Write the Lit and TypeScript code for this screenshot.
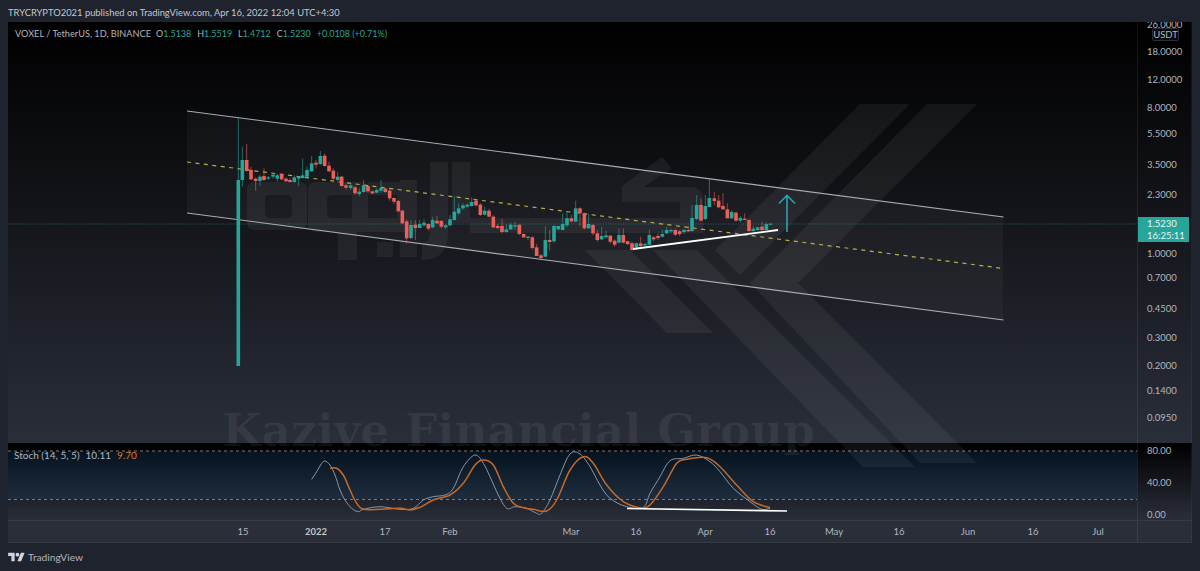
import { LitElement, html, css, svg } from "lit";
import { customElement } from "lit/decorators.js";

type C = [number, number, number, number, number, string];
const A: C[] = [
[187,140,260,180,240,"t"],[200,132,215,180,213,"r"],[213,200,240,210,238,"r"],[227,232,272,236,243,"r"],[240,225,258,230,243,"t"],[252,205,243,228,240,"r"],[265,228,240,232,236,"t"],[279,222,236,224,230,"t"],[292,222,245,226,236,"t"],[305,220,242,222,238,"r"],[318,232,246,236,244,"r"],[330,234,248,240,246,"r"],[343,226,248,232,246,"t"],[356,228,258,230,236,"t"],[368,176,236,226,234,"t"],[381,200,236,210,230,"t"],[395,168,215,190,214,"t"],[408,180,205,188,194,"r"],[421,153,195,168,192,"t"],[434,160,200,167,198,"r"],[447,185,215,197,214,"r"],[460,205,240,212,236,"r"],[473,215,245,230,240,"t"],[485,228,260,230,258,"r"],[498,250,268,256,263,"r"],[512,250,270,256,264,"t"],[525,258,285,262,280,"r"],[538,265,288,275,282,"t"],[551,240,278,256,276,"t"],[564,256,278,258,274,"r"],[577,272,282,274,280,"r"],[590,265,280,270,278,"t"],[603,240,278,264,272,"t"],[616,264,278,266,276,"r"],[629,265,302,272,295,"r"],[642,292,312,294,305,"r"],[655,300,335,303,334,"r"],[667,330,372,332,370,"r"],[680,358,430,364,415,"r"],[693,360,418,375,414,"t"],[706,360,420,374,384,"r"],[719,360,385,372,384,"t"],[732,358,380,368,376,"t"],[745,370,392,372,386,"r"],[758,350,385,360,382,"t"],[771,348,372,362,370,"r"]];
const B: C[] = [
[4,210,235,213,230,"r"],[17,222,238,226,232,"t"],[30,195,228,208,226,"t"],[43,138,212,185,210,"t"],[56,160,196,175,190,"t"],[69,160,180,166,175,"t"],[82,160,172,164,170,"t"],[95,142,170,156,168,"t"],[108,148,170,152,166,"r"],[121,160,198,164,195,"r"],[134,170,196,182,194,"t"],[147,176,202,182,200,"r"],[160,196,235,200,232,"r"],[173,222,238,228,234,"r"],[186,208,250,228,246,"r"],[199,222,248,238,246,"t"],[212,218,240,224,238,"t"],[225,215,240,226,230,"t"],[238,224,255,224,252,"r"],[251,250,264,252,262,"r"],[264,258,270,260,264,"t"],[277,258,298,262,294,"r"],[290,282,318,292,318,"r"],[303,312,332,316,324,"r"],[316,228,322,270,320,"t"],[329,240,302,270,276,"r"],[342,225,278,228,274,"t"],[355,228,240,228,238,"t"],[368,190,240,222,240,"t"],[381,185,232,205,226,"t"],[394,195,218,205,214,"r"],[407,152,216,175,215,"t"],[420,172,228,175,190,"r"],[433,188,238,190,235,"r"],[446,190,235,222,235,"t"],[459,222,255,225,250,"r"],[472,240,275,250,270,"r"],[485,230,270,258,268,"t"],[498,242,266,256,262,"t"],[511,255,280,257,275,"r"],[524,268,290,272,284,"r"],[537,235,280,255,278,"t"],[550,235,280,255,278,"r"],[563,272,285,274,282,"r"],[576,275,302,280,300,"r"],[589,278,298,280,292,"t"],[602,260,290,280,288,"r"],[615,278,290,282,286,"t"],[628,238,286,255,284,"t"],[641,258,274,262,268,"r"],[654,250,270,258,264,"r"],[667,240,262,252,260,"t"],[680,230,252,240,250,"t"],[693,235,250,240,244,"t"],[706,236,258,240,254,"r"],[719,240,258,244,252,"r"],[732,236,252,240,246,"t"],[745,228,245,240,244,"r"],[756,165,245,204,243,"t"],[770,135,210,165,207,"t"],[783,145,212,165,212,"r"],[796,135,210,168,207,"t"],[808,87,172,144,171,"t"],[823,125,165,145,153,"r"],[836,135,175,152,172,"r"],[849,130,178,168,178,"r"],[862,160,205,178,205,"r"],[875,180,207,186,205,"t"],[888,185,215,188,212,"r"],[901,198,218,204,212,"t"],[914,190,210,206,210,"r"],[927,208,245,210,243,"r"],[940,228,245,236,243,"t"],[953,232,242,232,240,"t"],[966,215,245,230,240,"r"],[979,218,240,222,240,"t"],[992,218,226,221,224,"t"]];

const candles: { x: number; wt: number; wb: number; bt: number; bb: number; c: string }[] = [
  { x: 238.3, wt: 118, wb: 366, bt: 180, bb: 366, c: "t" },
  ...A.map(([x, a, b, p, q, c]) => ({ x: x / 3 + 180, wt: a / 3 + 100, wb: b / 3 + 100, bt: p / 3 + 100, bb: q / 3 + 100, c })),
  ...B.map(([x, a, b, p, q, c]) => ({ x: x / 3 + 440, wt: a / 3 + 150, wb: b / 3 + 150, bt: p / 3 + 150, bb: q / 3 + 150, c })),
];

const curve = (pts: number[][]) => {
  let d = `M${pts[0][0]} ${pts[0][1]}`;
  for (let i = 0; i < pts.length - 1; i++) {
    const p0 = pts[Math.max(0, i - 1)], p1 = pts[i], p2 = pts[i + 1], p3 = pts[Math.min(pts.length - 1, i + 2)];
    const c1x = p1[0] + (p2[0] - p0[0]) / 6, c1y = p1[1] + (p2[1] - p0[1]) / 6;
    const c2x = p2[0] - (p3[0] - p1[0]) / 6, c2y = p2[1] - (p3[1] - p1[1]) / 6;
    d += `C${c1x.toFixed(1)} ${c1y.toFixed(1)} ${c2x.toFixed(1)} ${c2y.toFixed(1)} ${p2[0].toFixed(1)} ${p2[1].toFixed(1)}`;
  }
  return d;
};
const z5 = (a: number[][]) => a.map(([x, y]) => [x / 3, y / 3 + 400]);
const z6 = (a: number[][]) => a.map(([x, y]) => [x / 3 + 400, y / 3 + 400]);
const fast = [...z5([[935,238],[950,215],[965,190],[975,183],[990,195],[1005,225],[1020,270],[1035,300],[1055,325],[1075,335],[1090,328],[1140,320]]),
  ...z6([[0,328],[40,325],[70,300],[100,290],[135,285],[160,265],[190,200],[225,165],[250,190],[270,230],[295,285],[320,325],[345,320],[380,325],[410,340],[425,340],[450,300],[480,225],[510,162],[540,162],[570,200],[600,255],[630,295],[680,320],[730,322],[750,280],[780,230],[810,182],[850,175],[890,165],[930,185],[960,215],[1000,265],[1050,305],[1085,328],[1110,325]])];
const slow = [...z5([[990,205],[1010,205],[1030,225],[1050,270],[1070,310],[1090,328],[1140,328]]),
  ...z6([[0,325],[30,330],[60,322],[100,300],[150,285],[190,250],[225,195],[250,180],[280,195],[310,260],[340,310],[370,323],[400,328],[440,333],[470,300],[510,210],[550,170],[580,190],[620,255],[670,305],[720,323],[750,315],[790,260],[830,190],[860,178],[920,173],[960,200],[1010,255],[1060,305],[1110,323]])];

const priceLabels: [string, number][] = [["26.0000",25],["18.0000",51.7],["12.0000",79.5],["8.0000",108],["5.5000",134],["3.5000",165],["2.3000",195],["1.0000",253.5],["0.7000",278],["0.4500",309],["0.3000",338],["0.2000",366],["0.1400",391],["0.0950",417.5]];
const stochLabels: [string, number][] = [["80.00",451],["40.00",483],["0.00",515]];
const timeLabels: [string, number, boolean][] = [["15",243,false],["2022",316,true],["17",385,false],["Feb",450,false],["Mar",571,false],["16",636,false],["Apr",705,false],["16",770,false],["May",834,false],["16",899,false],["Jun",968,false],["16",1033,false],["Jul",1098,false]];

const marks = [
  "M860 104H910L740 275L715 250Z",
  "M927 104H977L798 283H750Z",
  "M653 250H697L915 467H863Z",
  "M750 283H798L977 463H920Z",
  "M585 250H630L713 333H667Z",
  "M622 186L662 157L672 168L643 187H690Q703 187 703 200V233H470V218H680V202H622Z",
  "M255 182H299Q307 182 307 190V222Q307 230 299 230H255Q247 230 247 222V190Q247 182 255 182ZM270 195Q265 195 265 200V213Q265 218 270 218H287Q292 218 292 213V200Q292 195 287 195Z",
  "M316 182H360Q368 182 368 190V195H332Q327 195 327 200V213Q327 218 332 218H352V195H368V218H397V195H368V182H400V180H417V232H357V260H338V232H316Q308 232 308 224V190Q308 182 316 182Z",
  "M377 242H393V257H377ZM400 242H417V257H400Z",
  "M430 162H448V233Q448 260 422 260V243Q430 243 430 233Z",
  "M452 162H470V223H452Z",
];

@customElement("app-root")
export class AppRoot extends LitElement {
  static styles = css`
    :host { display: block; width: 1200px; height: 571px; overflow: hidden; background: #1e232e;
      font-family: "Lato", "Open Sans", sans-serif; color: #b2b5be; }
    .page { display: flex; flex-direction: column; height: 571px; padding: 0 8px; box-sizing: border-box; }
    .head { height: 22px; display: flex; align-items: center; font-size: 9.4px; color: #c3c6cd; padding-top: 3px; box-sizing: border-box; white-space: nowrap; }
    .chart { position: relative; display: grid; grid-template-columns: 1129px 55px; grid-template-rows: 421px 77px 23px; }
    .pane { background: linear-gradient(#000, #2a2e39); }
    .axis { background: linear-gradient(#000, #2a2e39); border-left: 1px solid rgba(255,255,255,.07); border-right: 1px solid rgba(255,255,255,.05); box-sizing: border-box; overflow: hidden; position: relative; }
    .time { background: #2a2e39; border-top: 1px solid #363a45; border-bottom: 1px solid #363a45; box-sizing: border-box; position: relative; }
    .corner { background: #2a2e39; border-top: 1px solid #363a45; border-bottom: 1px solid #363a45; border-left: 1px solid rgba(255,255,255,.07); border-right: 1px solid rgba(255,255,255,.05); box-sizing: border-box; }
    .plot { position: absolute; left: 0; top: 0; width: 1129px; height: 498px; pointer-events: none; }
    .lbl { position: absolute; left: 9px; font-size: 9.5px; line-height: 12px; color: #b2b5be; transform: translateY(-50%); white-space: nowrap; }
    .tick { position: absolute; top: 5px; font-size: 9.5px; line-height: 12px; color: #b2b5be; transform: translateX(-50%); white-space: nowrap; }
    .tick.bold { font-weight: 700; color: #c3c6cd; }
    .unit { position: absolute; left: 14px; top: 6px; width: 27px; height: 13px; box-sizing: border-box; border: 1px solid #2a2e39; border-radius: 2px; background: #0a0a0c; font-size: 9.5px; line-height: 11px; text-align: center; color: #b2b5be; }
    .tag { position: absolute; left: 0; top: 195px; width: 51px; height: 25px; background: #26a69a; color: #e8f3f2; font-size: 9.5px; line-height: 12px; padding: 1px 0 0 9px; box-sizing: border-box; white-space: nowrap; }
    .legend { position: absolute; left: 7px; top: 6px; display: flex; gap: 5px; font-size: 9.2px; line-height: 12px; color: #b2b5be; white-space: nowrap; }
    .legend b { font-weight: 400; color: #26a69a; }
    .legend .ohlc { display: flex; gap: 6px; font-size: 8.95px; }
    .stoch { position: absolute; left: 6px; top: 427px; display: flex; gap: 6px; font-size: 10px; line-height: 12px; color: #b2b5be; white-space: nowrap; }
    .stoch .o { color: #d9792b; }
    .brand { flex: 1; display: flex; align-items: center; gap: 3px; font-size: 10.2px; color: #b2b5be; }
    .brand svg { width: 17px; height: 13px; fill: #d1d4dc; }
  `;

  render() {
    return html`<div class="page">
      <div class="head">TRYCRYPTO2021 published on TradingView.com, Apr 16, 2022 12:04 UTC+4:30</div>
      <div class="chart">
        <div class="pane"></div>
        <div class="axis">
          ${priceLabels.map(([t, y]) => html`<div class="lbl" style="top:${y - 22}px">${t}</div>`)}
          <div class="unit">USDT</div>
          <div class="tag">1.5230<br />16:25:11</div>
        </div>
        <div class="pane"></div>
        <div class="axis">
          ${stochLabels.map(([t, y]) => html`<div class="lbl" style="top:${y - 443}px">${t}</div>`)}
        </div>
        <div class="time">
          ${timeLabels.map(([t, x, b]) => html`<div class="tick ${b ? "bold" : ""}" style="left:${x - 8}px">${t}</div>`)}
        </div>
        <div class="corner"></div>

        <svg class="plot" viewBox="8 22 1129 498">
          ${svg`
            <rect x="8" y="451" width="1129" height="48" fill="#2196f3" fill-opacity=".1"/>
            <line x1="8" y1="451" x2="1137" y2="451" stroke="#787b86" stroke-dasharray="3 3"/>
            <line x1="8" y1="499.5" x2="1137" y2="499.5" stroke="#787b86" stroke-dasharray="3 3"/>
            <path d="M187 111L1003 217V320L187 213Z" fill="#fff" fill-opacity=".035"/>
            <g fill="#fff" fill-opacity=".055">${marks.map((d) => svg`<path d=${d} fill-rule="evenodd"/>`)}</g>
            <line x1="8" y1="224" x2="1137" y2="224" stroke="#26a69a" stroke-opacity=".55" stroke-dasharray="1 1.5"/>
            <line x1="187" y1="111" x2="1003.5" y2="217" stroke="#a9acb4" stroke-width="1.1"/>
            <line x1="187" y1="213" x2="1003.5" y2="320" stroke="#a9acb4" stroke-width="1.1"/>
            <line x1="187" y1="162" x2="1003.5" y2="268.5" stroke="#d4c84e" stroke-opacity=".85" stroke-width="1.2" stroke-dasharray="4 4.5"/>
            ${candles.map((k) => {
              const col = k.c === "t" ? "#26a69a" : "#ef5f5a";
              return svg`<line x1=${k.x} x2=${k.x} y1=${k.wt} y2=${k.wb} stroke=${col} stroke-opacity=".6"/>
                <rect x=${k.x - 1.8} y=${k.bt} width="3.6" height=${Math.max(1, k.bb - k.bt)} fill=${col}/>`;
            })}
            <line x1="633" y1="249" x2="778" y2="230" stroke="#fff" stroke-width="1.8"/>
            <path d="M787 232V196M779 203.5L787 195.5L795 203.5" fill="none" stroke="#26a3b5" stroke-width="1.6"/>
            <path d=${curve(fast)} fill="none" stroke="#8498ab" stroke-width="1"/>
            <path d=${curve(slow)} fill="none" stroke="#c4692a" stroke-width="1.5"/>
            <line x1="627" y1="508.5" x2="787" y2="511" stroke="#fff" stroke-width="1.6"/>
            <text x="222" y="446" font-family="DejaVu Serif" font-weight="700" font-size="45" textLength="593" lengthAdjust="spacingAndGlyphs" fill="#fff" fill-opacity=".06">Kazive Financial Group</text>
          `}
        </svg>
        <div class="legend">
          <span>VOXEL / TetherUS, 1D, BINANCE</span>
          <span class="ohlc">
            <span>O<b>1.5138</b></span><span>H<b>1.5519</b></span><span>L<b>1.4712</b></span><span>C<b>1.5230</b></span>
            <b>+0.0108 (+0.71%)</b>
          </span>
        </div>
        <div class="stoch"><span>Stoch (14, 5, 5)</span><span>10.11</span><span class="o">9.70</span></div>
      </div>
      <div class="brand">
        <svg viewBox="0 0 36 28"><path d="M14 22H7V11H0V4h14v18zM28 22h-8l7.5-18h8L28 22z"/><circle cx="20" cy="8" r="4"/></svg>
        <span>TradingView</span>
      </div>
    </div>`;
  }
}
